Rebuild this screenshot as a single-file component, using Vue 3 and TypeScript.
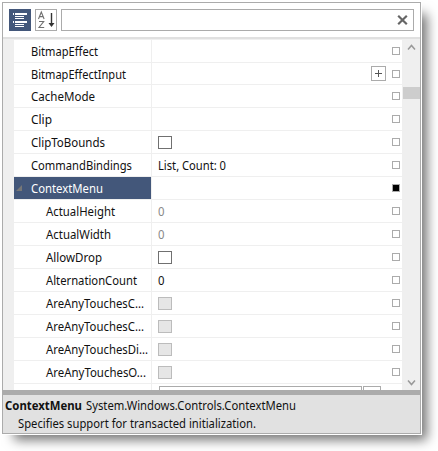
<script setup lang="ts">
interface PropertyRow {
  name: string
  width: number
  kind?: 'text' | 'check' | 'expand'
  value?: string
  readonly?: boolean
  child?: boolean
  selected?: boolean
  short?: boolean
}

const rows: PropertyRow[] = [
  { name: 'BitmapEffect', width: 67 },
  { name: 'BitmapEffectInput', width: 95, kind: 'expand', short: true },
  { name: 'CacheMode', width: 64 },
  { name: 'Clip', width: 21 },
  { name: 'ClipToBounds', width: 74, kind: 'check' },
  { name: 'CommandBindings', width: 101, kind: 'text', value: 'List, Count: 0' },
  { name: 'ContextMenu', width: 72, selected: true },
  { name: 'ActualHeight', width: 69, kind: 'text', value: '0', readonly: true, child: true },
  { name: 'ActualWidth', width: 65, kind: 'text', value: '0', readonly: true, child: true },
  { name: 'AllowDrop', width: 56, kind: 'check', child: true },
  { name: 'AlternationCount', width: 91, kind: 'text', value: '0', child: true },
  { name: 'AreAnyTouchesC...', width: 98, kind: 'check', readonly: true, child: true },
  { name: 'AreAnyTouchesC...', width: 98, kind: 'check', readonly: true, child: true },
  { name: 'AreAnyTouchesDi...', width: 102, kind: 'check', readonly: true, child: true },
  { name: 'AreAnyTouchesO...', width: 100, kind: 'check', readonly: true, child: true },
]
</script>

<template>
  <div class="stage">
    <section class="panel">
      <header class="toolbar">
        <button class="tool active" aria-label="Categorized">
          <svg width="22" height="22" viewBox="0 0 22 22" shape-rendering="crispEdges">
            <path fill="#fff" d="M4 4h1v2H4zM6 4h12v2H6zM6 7h9v1H6zM6 9h9v1H6zM4 12h1v2H4zM6 12h12v2H6zM6 15h9v1H6zM6 17h9v1H6z" />
          </svg>
        </button>
        <button class="tool" aria-label="Alphabetical">
          <svg width="20" height="20" viewBox="0 0 20 20" fill="none" stroke="#707070">
            <path d="M2.5 9 5.3 2l2.8 7M3.5 6.6h3.6M3 11.5h4.7L3 17.5h5.2" stroke-width="1.1" />
            <path d="M15.5 3v11" stroke="#333" stroke-width="1.4" />
            <path d="M12.5 13h6l-3 4z" fill="#333" stroke="none" />
          </svg>
        </button>
        <div class="search">
          <svg width="11" height="10" viewBox="0 0 11 10">
            <path d="M1.2 0.8 9.8 9.2M9.8 0.8 1.2 9.2" stroke="#666" stroke-width="2.2" />
          </svg>
        </div>
      </header>

      <div class="body">
        <div class="gutter"></div>
        <div class="grid">
          <div v-for="(row, i) in rows" :key="i" class="row" :class="{ short: row.short }">
            <div class="name" :class="{ child: row.child, selected: row.selected }">
              <svg v-if="row.selected" class="arrow" width="6" height="6" viewBox="0 0 6 6">
                <path d="M6 0v6H0z" fill="#777" />
              </svg>
              <svg class="label" :width="row.child ? 105 : 119" height="20">
                <text x="0" y="15" :textLength="row.width" lengthAdjust="spacingAndGlyphs">{{ row.name }}</text>
              </svg>
            </div>
            <div class="value" :class="{ readonly: row.readonly }">
              <span v-if="row.kind === 'check'" class="check"></span>
              <svg v-else-if="row.kind === 'text'" class="label" width="90" height="20">
                <text x="0" y="15" :textLength="row.value === '0' ? 6.5 : 68" lengthAdjust="spacingAndGlyphs">{{ row.value }}</text>
              </svg>
              <span v-if="row.kind === 'expand'" class="expand">
                <svg width="13" height="13" viewBox="0 0 13 13">
                  <path d="M3 6.5h7M6.5 3v7" stroke="#555" />
                </svg>
              </span>
            </div>
            <div class="marker"><span :class="{ set: row.selected }"></span></div>
          </div>
          <div class="partial">
            <div class="name"></div>
            <div class="value"><span class="box"></span><span class="more"></span></div>
          </div>
        </div>
        <div class="scroll">
          <svg width="9" height="7" viewBox="0 0 9 7" fill="none" stroke="#999" stroke-width="1.5">
            <path d="M1 5.5 4.5 1.5 8 5.5" />
          </svg>
          <div class="track"><div class="thumb"></div></div>
          <svg width="9" height="7" viewBox="0 0 9 7" fill="none" stroke="#999" stroke-width="1.5">
            <path d="M1 1.5 4.5 5.5 8 1.5" />
          </svg>
        </div>
      </div>

      <footer class="description">
        <svg width="410" height="37">
          <text x="2" y="15" class="bold" textLength="77" lengthAdjust="spacingAndGlyphs">ContextMenu</text>
          <text x="83" y="15" textLength="210" lengthAdjust="spacingAndGlyphs">System.Windows.Controls.ContextMenu</text>
          <text x="15" y="33" textLength="238" lengthAdjust="spacingAndGlyphs">Specifies support for transacted initialization.</text>
        </svg>
      </footer>
    </section>
  </div>
</template>

<style>
body { background: #fff; overflow: hidden; }
</style>

<style scoped>
* { box-sizing: border-box; }
.stage { width: 438px; height: 451px; padding: 2px; overflow: hidden; background: #fff; }
.panel {
  width: 419px; height: 432px; border: 1px solid #ababab; background: #fff;
  display: flex; flex-direction: column;
  box-shadow: 0 0 0 1px #fff, 9px 9px 11px -3px rgba(0, 0, 0, 0.55);
  font-family: "Noto Sans", "Open Sans", sans-serif; font-size: 12px;
}
.toolbar { height: 37px; flex: none; display: flex; gap: 4px; padding: 6px 6px 0; border-bottom: 1px solid #efefef; box-shadow: inset 0 -2px #e0e0e0; }
.tool { width: 22px; height: 22px; flex: none; padding: 0; border: 1px solid #ababab; background: #fff; }
.tool.active { border: 0; background: #43577a; }
.tool svg { display: block; }
.search { flex: 1; height: 22px; border: 1px solid #ababab; display: flex; justify-content: flex-end; align-items: center; padding-right: 5px; }
.body { height: 350px; flex: none; display: flex; overflow: hidden; }
.gutter { width: 11px; background: #efefef; }
.grid { width: 388px; overflow: hidden; }
.row { height: 23px; display: flex; border-bottom: 1px solid #efefef; }
.row.short { height: 22px; }
.name { width: 138px; flex: none; border-right: 1px solid #efefef; display: flex; align-items: center; padding-left: 17px; position: relative; }
.name.child { padding-left: 32px; }
.name.selected { background: #43577a; }
.label { display: block; flex: none; fill: #111; overflow: visible; }
.selected .label { fill: #fff; }
.arrow { position: absolute; left: 2px; top: 8px; }
.value { width: 233px; flex: none; display: flex; align-items: center; padding-left: 6px; }
.value .label { margin-left: -0.5px; }
.value.readonly .label { fill: #888; }
.check { width: 14px; height: 13px; margin-top: 1px; border: 1px solid #707070; }
.readonly .check { border-color: #bcbcbc; background: #e6e6e6; }
.expand { width: 15px; height: 15px; border: 1px solid #ababab; margin: 0 -1px 0 auto; }
.expand svg { display: block; }
.marker { width: 17px; display: flex; align-items: center; padding-left: 7px; }
.marker span { width: 8px; height: 8px; border: 1px solid #ababab; }
.marker .set { background: #000; }
.partial { height: 8px; display: flex; }
.partial .value { align-items: flex-start; gap: 1px; padding: 2px 0 0 7px; }
.box { width: 203px; height: 20px; border: 1px solid #ababab; }
.more { width: 18px; height: 20px; border: 1px solid #ababab; }
.scroll { width: 18px; background: #efefef; display: flex; flex-direction: column; align-items: center; padding: 4px 0; }
.track { width: 18px; flex: 1; padding: 36px 0 0 1px; }
.thumb { height: 12px; background: #cdcdcd; }
.description { flex: 1; background: #e1e1e1; border-top: 5px solid #ababab; }
.description svg { display: block; fill: #111; }
.bold { font-weight: 700; }
</style>
